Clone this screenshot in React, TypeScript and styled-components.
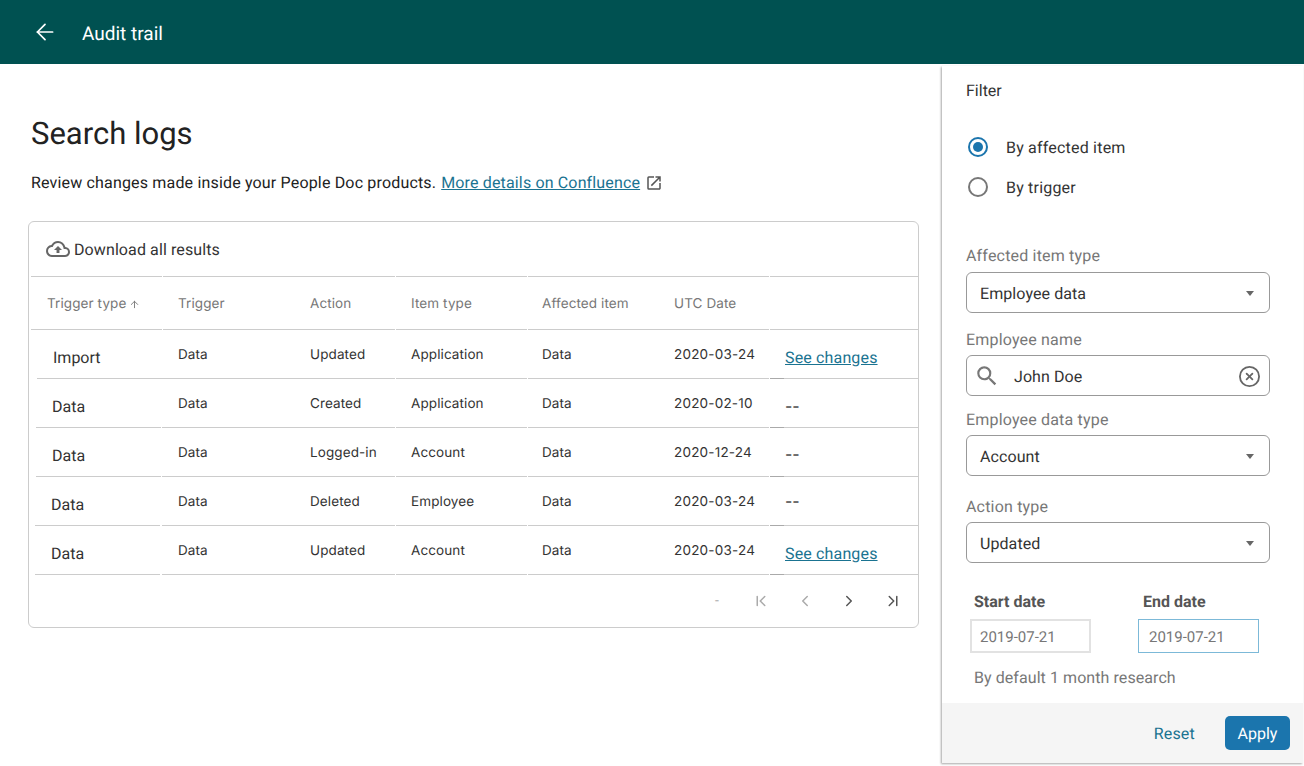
import React from "react";
import styled, { createGlobalStyle } from "styled-components";
import { ArrowLeft, ArrowUp, ChevronFirst, ChevronLast, ChevronLeft, ChevronRight, CircleX } from "lucide-react";
import { MdOutlineCloudUpload, MdOutlineOpenInNew, MdSearch } from "react-icons/md";

const Global = createGlobalStyle`
  html, body { margin: 0; padding: 0; height: 766px; overflow: hidden; background: #fff; }
  body { font-family: Roboto, "Liberation Sans", sans-serif; color: #222; text-rendering: geometricPrecision; }
  * { box-sizing: border-box; }
`;

const Page = styled.div`
  width: 1304px;
  height: 766px;
  display: flex;
  flex-direction: column;
`;
const TopBar = styled.header`
  height: 64px;
  flex: none;
  background: #005151;
  color: #fff;
  display: flex;
  align-items: center;
  padding-left: 32px;
  gap: 24px;
  font-size: 19px;
`;
const BarTitle = styled.span`
  padding-top: 2px;
`;
const Body = styled.div`
  flex: 1;
  display: flex;
  min-height: 0;
`;
const Main = styled.main`
  width: 942px;
  flex: none;
  padding: 51px 23px 0 28px;
`;
const Title = styled.h1`
  margin: 0 0 0 3px;
  font-weight: 400;
  font-size: 31px;
  line-height: 38px;
  color: #222;
`;
const Intro = styled.p`
  margin: 20px 0 0 3px;
  font-size: 16px;
  line-height: 20px;
  letter-spacing: 0.17px;
  display: flex;
  align-items: center;
  gap: 5px;
`;
const TextLink = styled.a`
  color: #1a7391;
  text-decoration: underline;
  font-size: 16px;
  letter-spacing: 0.15px;
`;
const Card = styled.section`
  margin-top: 28px;
  width: 891px;
  height: 407px;
  border: 1px solid #ccc;
  border-radius: 6px;
  display: flex;
  flex-direction: column;
`;
const Toolbar = styled.div`
  height: 54px;
  flex: none;
  display: flex;
  align-items: center;
  padding-left: 17px;
  gap: 4px;
  font-size: 16px;
  letter-spacing: 0.1px;
  color: #333;
  svg { color: #666; }
`;
const COLS = "132px 233px 132px 242px 1fr";
const Row = styled.div`
  display: grid;
  grid-template-columns: ${COLS};
  margin-left: 2px;
`;
const HeadCell = styled.div`
  height: 54px;
  padding-top: 2px;
  border-top: 1px solid #ccc;
  border-bottom: 1px solid #ccc;
  display: flex;
  align-items: center;
  font-family: Inter, Roboto, sans-serif;
  font-size: 13.5px;
  letter-spacing: 0.1px;
  color: #777;
  margin-right: 1px;
  &:last-child { margin-right: 0; }
`;
const Col = styled.span<{ $w?: number; $pad?: number }>`
  display: inline-flex;
  align-items: center;
  gap: 3px;
  padding-left: ${(p) => p.$pad ?? 0}px;
  width: ${(p) => (p.$w ? `${p.$w}px` : "auto")};
  flex: none;
`;
const BodyCell = styled.div<{ $shift?: number; $end?: number; $mark?: boolean }>`
  height: 50px;
  margin-top: -1px;
  padding-top: 1px;
  border-bottom: 1px solid #ccc;
  display: flex;
  align-items: center;
  margin-left: ${(p) => p.$shift ?? 0}px;
  margin-right: ${(p) => p.$end ?? 1}px;
  position: relative;
  &:last-child { margin-right: 0; }
  &::after {
    content: "";
    display: ${(p) => (p.$mark ? "block" : "none")};
    position: absolute;
    left: 0;
    bottom: -1px;
    width: 14px;
    height: 1px;
    background: #aaa;
  }
`;
const DataText = styled.span<{ $w?: number; $pad?: number }>`
  font-family: Inter, Roboto, sans-serif;
  font-size: 13.5px;
  letter-spacing: 0.1px;
  color: #333;
  position: relative;
  top: 2px;
  margin-top: -2px;
  padding-left: ${(p) => p.$pad ?? 0}px;
  width: ${(p) => (p.$w ? `${p.$w}px` : "auto")};
  flex: none;
`;
const DateText = styled(DataText)`
  letter-spacing: 0.2px;
`;
const MainText = styled.span<{ $pad: number }>`
  font-size: 16px;
  color: #333;
  padding-left: ${(p) => p.$pad}px;
  position: relative;
  top: 3px;
`;
const Dash = styled.span<{ $top: number }>`
  font-family: Inter, Roboto, sans-serif;
  font-size: 16px;
  color: #333;
  padding-left: 15px;
  position: relative;
  top: ${(p) => p.$top}px;
`;
const Pager = styled.div`
  flex: 1;
  display: flex;
  align-items: center;
  justify-content: flex-end;
  padding: 0 13px 0 0;
  gap: 20px;
`;
const PagerBtn = styled.span<{ $off?: boolean }>`
  width: 24px;
  height: 24px;
  display: flex;
  align-items: center;
  justify-content: center;
  color: ${(p) => (p.$off ? "#aaa" : "#555")};
  font-size: 14px;
`;
const Panel = styled.aside`
  width: 361px;
  flex: none;
  margin-top: 2px;
  margin-bottom: 3px;
  display: flex;
  flex-direction: column;
  background: #fff;
  box-shadow: -1px 1px 2px rgba(0,0,0,.35);
`;
const PanelBody = styled.div`
  flex: 1;
  padding: 15px 33px 0 24px;
`;
const PanelTitle = styled.div`
  font-size: 16px;
  line-height: 19px;
  color: #333;
`;
const RadioRow = styled.label`
  display: flex;
  align-items: center;
  height: 40px;
  gap: 18px;
  font-size: 16px;
  letter-spacing: 0.2px;
  color: #333;
  padding-left: 2px;
`;
const Radios = styled.div`
  margin-top: 27px;
  margin-bottom: 39px;
`;
const RadioDot = styled.span<{ $on?: boolean }>`
  width: 20px;
  height: 20px;
  border-radius: 50%;
  border: 2px solid ${(p) => (p.$on ? "#1b75ad" : "#777")};
  display: flex;
  align-items: center;
  justify-content: center;
  &::after {
    content: "";
    display: ${(p) => (p.$on ? "block" : "none")};
    width: 10px;
    height: 10px;
    border-radius: 50%;
    background: #1b75ad;
  }
`;
const FieldLabel = styled.div<{ $top?: number; $gap?: number }>`
  font-size: 16px;
  line-height: 19px;
  letter-spacing: 0.18px;
  color: #777;
  margin-top: ${(p) => p.$top ?? 0}px;
  margin-bottom: ${(p) => p.$gap ?? 7}px;
`;
const Control = styled.div`
  height: 41px;
  border: 1px solid #999;
  border-radius: 6px;
  display: flex;
  align-items: center;
  padding: 1px 13px 0;
  font-size: 16px;
  letter-spacing: 0.08px;
  color: #333;
  justify-content: space-between;
`;
const Caret = styled.span`
  width: 0;
  height: 0;
  border-left: 4px solid transparent;
  border-right: 4px solid transparent;
  border-top: 5px solid #666;
  margin-right: 2px;
`;
const SearchLeft = styled.span`
  display: flex;
  align-items: center;
  gap: 14px;
  margin-left: -6px;
  svg { color: #777; }
`;
const ClearIcon = styled(CircleX)`
  color: #666;
  margin-right: -5px;
`;
const DateGrid = styled.div`
  display: grid;
  grid-template-columns: 168px 121px;
  margin-top: 30px;
  margin-left: 4px;
`;
const DateField = styled.div``;
const DateLabel = styled.div<{ $ml: number }>`
  font-size: 16px;
  font-weight: 700;
  color: #555;
  line-height: 18px;
  margin-left: ${(p) => p.$ml}px;
  margin-bottom: 8px;
`;
const DateBox = styled.div<{ $focus?: boolean }>`
  width: 121px;
  height: 34px;
  border: ${(p) => (p.$focus ? "1px solid #7cb9d8" : "2px solid #e2e2e2")};
  display: flex;
  align-items: center;
  padding: 1px 0 0 ${(p) => (p.$focus ? 10 : 8)}px;
  font-size: 15px;
  color: #777;
`;
const Hint = styled.div`
  font-size: 16px;
  line-height: 19px;
  letter-spacing: 0.07px;
  color: #777;
  margin: 15px 0 0 8px;
`;
const PanelFoot = styled.div`
  height: 60px;
  flex: none;
  background: #f5f5f5;
  display: flex;
  align-items: center;
  justify-content: flex-end;
  padding-right: 13px;
  gap: 30px;
  font-size: 16px;
`;
const ResetBtn = styled.span`
  color: #1a7391;
  letter-spacing: 0.2px;
`;
const ApplyBtn = styled.span`
  width: 65px;
  height: 34px;
  border-radius: 5px;
  background: #1b75ad;
  color: #fff;
  display: flex;
  align-items: center;
  justify-content: center;
`;

const rows = [
  { t: "Import", shift: 1, a: "Updated", i: "Application", d: "2020-03-24", link: true, dash: 3 },
  { t: "Data", shift: 0, a: "Created", i: "Application", d: "2020-02-10", link: false, dash: 3 },
  { t: "Data", shift: 0, a: "Logged-in", i: "Account", d: "2020-12-24", link: false, dash: 2 },
  { t: "Data", shift: -1, a: "Deleted", i: "Employee", d: "2020-03-24", link: false, dash: 0 },
  { t: "Data", shift: -1, a: "Updated", i: "Account", d: "2020-03-24", link: true, dash: 3 },
];

export default function App() {
  return (
    <Page>
      <Global />
      <TopBar>
        <ArrowLeft size={26} strokeWidth={1.6} />
        <BarTitle>Audit trail</BarTitle>
      </TopBar>
      <Body>
        <Main>
          <Title>Search logs</Title>
          <Intro>
            <span>Review changes made inside your People Doc products.</span>
            <TextLink>More details on Confluence</TextLink>
            <MdOutlineOpenInNew size={18} color="#555" />
          </Intro>
          <Card>
            <Toolbar>
              <MdOutlineCloudUpload size={24} />
              <span>Download all results</span>
            </Toolbar>
            <Row>
              <HeadCell><Col $pad={16}>Trigger type <ArrowUp size={11} /></Col></HeadCell>
              <HeadCell><Col $pad={15} $w={147}>Trigger</Col><Col>Action</Col></HeadCell>
              <HeadCell><Col $pad={15}>Item type</Col></HeadCell>
              <HeadCell><Col $pad={14} $w={146}>Affected item</Col><Col>UTC Date</Col></HeadCell>
              <HeadCell />
            </Row>
            {rows.map((r, i) => (
              <Row key={i}>
                <BodyCell $shift={5 + r.shift} $end={2 - r.shift}><MainText $pad={16}>{r.t}</MainText></BodyCell>
                <BodyCell $shift={-1}><DataText $pad={16} $w={148}>Data</DataText><DataText>{r.a}</DataText></BodyCell>
                <BodyCell><DataText $pad={15}>{r.i}</DataText></BodyCell>
                <BodyCell><DataText $pad={14} $w={146}>Data</DataText><DateText>{r.d}</DateText></BodyCell>
                <BodyCell $mark>
                  {r.link ? <MainText $pad={15}><TextLink>See changes</TextLink></MainText> : <Dash $top={r.dash}>--</Dash>}
                </BodyCell>
              </Row>
            ))}
            <Pager>
              <PagerBtn $off>-</PagerBtn>
              <PagerBtn $off><ChevronFirst size={18} /></PagerBtn>
              <PagerBtn $off><ChevronLeft size={18} /></PagerBtn>
              <PagerBtn><ChevronRight size={18} /></PagerBtn>
              <PagerBtn><ChevronLast size={18} /></PagerBtn>
            </Pager>
          </Card>
        </Main>
        <Panel>
          <PanelBody>
            <PanelTitle>Filter</PanelTitle>
            <Radios>
              <RadioRow><RadioDot $on /><span>By affected item</span></RadioRow>
              <RadioRow><RadioDot /><span>By trigger</span></RadioRow>
            </Radios>
            <FieldLabel>Affected item type</FieldLabel>
            <Control><span>Employee data</span><Caret /></Control>
            <FieldLabel $top={17} $gap={6}>Employee name</FieldLabel>
            <Control>
              <SearchLeft><MdSearch size={26} /><span>John Doe</span></SearchLeft>
              <ClearIcon size={23} strokeWidth={1.9} />
            </Control>
            <FieldLabel $top={14} $gap={6}>Employee data type</FieldLabel>
            <Control><span>Account</span><Caret /></Control>
            <FieldLabel $top={21} $gap={6}>Action type</FieldLabel>
            <Control><span>Updated</span><Caret /></Control>
            <DateGrid>
              <DateField><DateLabel $ml={4}>Start date</DateLabel><DateBox>2019-07-21</DateBox></DateField>
              <DateField><DateLabel $ml={5}>End date</DateLabel><DateBox $focus>2019-07-21</DateBox></DateField>
            </DateGrid>
            <Hint>By default 1 month research</Hint>
          </PanelBody>
          <PanelFoot>
            <ResetBtn>Reset</ResetBtn>
            <ApplyBtn>Apply</ApplyBtn>
          </PanelFoot>
        </Panel>
      </Body>
    </Page>
  );
}
